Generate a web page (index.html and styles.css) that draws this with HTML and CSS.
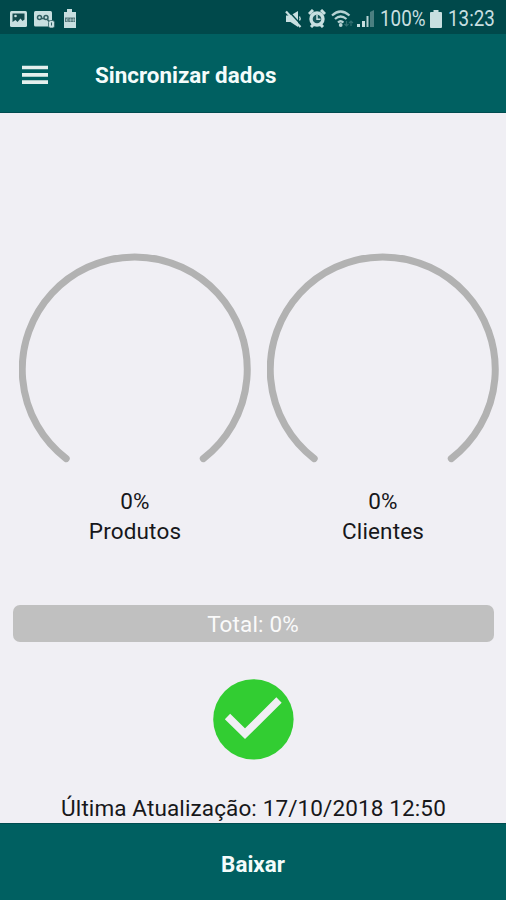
FILE: index.html
```html
<!DOCTYPE html>
<html lang="pt-BR">
<head>
<meta charset="utf-8">
<title>Sincronizar dados</title>
<link rel="stylesheet" href="styles.css">
</head>
<body>
<div class="screen">
  <div class="status">
    <div class="notices">
      <svg width="18" height="18" viewBox="0 0 18 18"><rect x="0" y="1" width="17" height="16" rx="1.5" fill="#c8dfe0"/><path d="M2.500 3.500h12v6l-2 1.500-2-2.500-3 3.500-2-2-3 2z" fill="#12494d"/><circle cx="5.500" cy="6" r="1.300" fill="#c8dfe0"/></svg>
      <svg width="21" height="18" viewBox="0 0 21 18"><rect x="0" y="1" width="18" height="15.500" rx="1.500" fill="#c8dfe0"/><g fill="none" stroke="#315f63" stroke-width="1.500"><circle cx="5.500" cy="7.500" r="2"/><circle cx="12" cy="7.500" r="2"/><path d="M7.500 8.500h2.500M13.500 9.500l1.500 2"/></g><rect x="14.500" y="10.500" width="6" height="7.500" rx="2" fill="#c8dfe0" stroke="#315f63" stroke-width=".8"/><path d="M17.500 12.500v3" stroke="#315f63"/></svg>
      <svg width="14" height="20" viewBox="0 0 14 20"><path d="M4 0h5v3h4v16H1V3h3z" fill="#c8dfe0"/><path d="M2 8.500h10v4.500H2z" fill="#54777a"/><path d="M5.500 10h-2v2h2M8 10h-1v2h1zM11 10h-1v2h1z" fill="none" stroke="#b0cccd" stroke-width=".8"/></svg>
    </div>
    <div class="system">
      <svg width="17" height="18" viewBox="0 0 17 18"><path d="M1 5.500h4.500L13 1v16l-7.500-5H1z" fill="#c8dfe0"/><path d="M2.500 0l14 15" stroke="#00494b" stroke-width="1.500"/><path d="M1 1.500l14.500 15.500" stroke="#c8dfe0" stroke-width="2.200"/><path d="M14.500 6.500q1.300 2 0 4" fill="none" stroke="#c8dfe0" stroke-width="1.300"/></svg>
      <svg class="alarm" width="18" height="19" viewBox="0 0 18 19"><path d="M1 5l4-4M17 5l-4-4M3 18l3-3M15 18l-3-3" stroke="#c8dfe0" stroke-width="3"/><circle cx="9" cy="10" r="7.700" fill="#c8dfe0"/><circle cx="9" cy="10" r="4.300" fill="#17575b"/><path d="M9 6v4.200h3.500" fill="none" stroke="#c8dfe0" stroke-width="1.500"/></svg>
      <svg class="wifi" width="23" height="18" viewBox="0 0 23 18"><g fill="none" stroke="#b6d2d3" stroke-width="2.200"><path d="M1 5.500Q9.500-2.500 18.500 5.500M4 9q5.500-5 11.500 0M7 12.500q2.500-2.500 5.500 0"/></g><circle cx="9.700" cy="15" r="1.900" fill="#b6d2d3"/><path d="M15.500 11v5m-2-2l2 2 2-2M20 16v-5m-2 2l2-2 2 2" fill="none" stroke="#316e70" stroke-width="1.200"/></svg>
      <svg class="signal" width="18" height="18" viewBox="0 0 18 18"><path d="M0 14h3v3H0zM5 11h3v6H5z" fill="#c8dfe0"/><path d="M9.500 6h2v11h-2z" fill="#b6d2d3"/><path d="M13 2l4-2v17h-4z" fill="#4b7f81"/></svg>
      <span class="charge"><span class="digits">100%</span></span>
      <svg class="battery" width="12" height="18" viewBox="0 0 12 18"><path d="M3.500 0h5v2H11q1 0 1 1v14q0 1-1 1H1q-1 0-1-1V3q0-1 1-1h2.500z" fill="#c8dfe0"/></svg>
      <span class="clock"><span class="digits">13:23</span></span>
    </div>
  </div>
  <header class="bar">
    <svg class="menu" width="26" height="20" viewBox="0 0 26 20"><path d="M0 2.500h26M0 9.800h26M0 17.100h26" stroke="#e4efed" stroke-width="3.700"/></svg>
    <h1>Sincronizar dados</h1>
  </header>
  <main>
    <div class="gauges">
      <section class="gauge">
        <svg width="232" height="212" viewBox="0 0 232 212"><path d="M47.200 205.600A112.500 112.500 0 1 1 184.300 205.600"/></svg>
        <p>0%</p><p class="name">Produtos</p>
      </section>
      <section class="gauge">
        <svg width="232" height="212" viewBox="0 0 232 212"><path d="M47.200 205.600A112.500 112.500 0 1 1 184.300 205.600"/></svg>
        <p>0%</p><p class="name">Clientes</p>
      </section>
    </div>
    <div class="total">Total: 0%</div>
    <svg class="done" width="82" height="82" viewBox="0 0 82 82"><circle cx="41.400" cy="41.400" r="40.200" fill="#32cd32"/><path d="M15.500 38.500L33 55.700 67 22" fill="none" stroke="#f0eff4" stroke-width="7.600"/></svg>
    <p class="updated">Última Atualização: 17/10/2018 12:50</p>
  </main>
  <button class="download">Baixar</button>
</div>
</body>
</html>
```

FILE: styles.css
```css
* { box-sizing: border-box; }
body { margin: 0; font-family: Roboto, sans-serif; }
p, h1 { margin: 0; }
svg { display: block; flex: none; }
.screen { width: 506px; height: 900px; display: flex; flex-direction: column; background: #f0eff4; overflow: hidden; }
.status { height: 34px; flex: none; display: flex; justify-content: space-between; align-items: center; padding: 3px 11px 0 10px; background: #00494b; color: #c8dfe0; }
.notices { display: flex; align-items: center; gap: 6px; }
.notices svg:last-child { margin-left: 2px; }
.system { display: flex; align-items: center; font-size: 22px; line-height: 24px; }
.alarm { margin-left: 6px; }
.wifi { margin-left: 5px; }
.signal { margin-left: 3px; }
.charge { width: 45px; margin-left: 5px; }
.digits { display: inline-block; transform: scaleX(0.855); transform-origin: left center; white-space: nowrap; }
.battery { margin-left: 5px; }
.clock { width: 47px; margin-left: 6px; }
.bar { height: 79px; flex: none; display: flex; align-items: center; padding: 3px 22px 0; background: #006061; border-bottom: 1px solid #004c50; }
h1 { margin-left: 47px; font-size: 22.4px; line-height: 28px; font-weight: 700; color: #f4fcfb; white-space: nowrap; }
main { flex: 1; min-height: 0; display: flex; flex-direction: column; align-items: center; padding-top: 140px; }
.gauges { align-self: stretch; display: flex; gap: 16px; padding-left: 19px; }
.gauge { width: 232px; flex: none; text-align: center; font-size: 22.5px; line-height: 30px; letter-spacing: 0.15px; color: #17171a; }
.gauge svg { margin-bottom: 21px; }
.gauge path { fill: none; stroke: #b2b2b2; stroke-width: 7px; stroke-linecap: round; }
.total { width: 481px; height: 37px; margin-top: 59px; border-radius: 7px; background: #c0c0c0; color: #fafafa; font-size: 22.5px; line-height: 39px; letter-spacing: 0.15px; text-align: center; }
.done { margin-top: 36px; }
.updated { margin-top: 33px; padding-left: 1px; font-size: 22.5px; line-height: 30px; letter-spacing: 0.12px; color: #17171a; white-space: nowrap; }
.download { height: 77px; flex: none; border: 0; border-top: 1px solid #004c50; padding: 3px 0 0; background: #006061; color: #f4fcfb; font: 700 22.4px/28px Roboto, sans-serif; }
```
